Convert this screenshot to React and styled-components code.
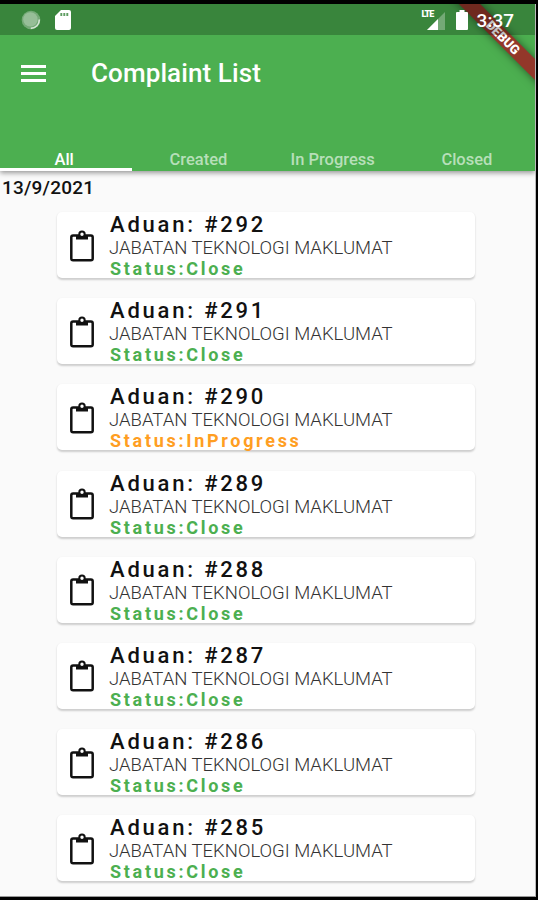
import React from "react";
import styled, { createGlobalStyle } from "styled-components";

const tabs = ["All", "Created", "In Progress", "Closed"];

const complaints = [
  { id: 292, status: "Close" },
  { id: 291, status: "Close" },
  { id: 290, status: "InProgress" },
  { id: 289, status: "Close" },
  { id: 288, status: "Close" },
  { id: 287, status: "Close" },
  { id: 286, status: "Close" },
  { id: 285, status: "Close" },
];

function StatusBar() {
  return (
    <StatusContainer>
      <StatusIcons>
        <svg width="20" height="20" viewBox="0 0 20 20">
          <circle cx="10" cy="10" r="9.3" fill="#fff" fillOpacity="0.3" />
          <circle cx="9.4" cy="9.400" r="7.2" fill="#fff" fillOpacity="0.25" />
          <path
            d="M18.3 9.500a8.500 8.500 0 0 1-8.500 8.900"
            fill="none"
            stroke="#fff"
            strokeOpacity="0.7"
            strokeWidth="1.6"
          />
        </svg>
        <svg width="16" height="20" viewBox="0 0 16 20">
          <path
            d="M6 0h8a2 2 0 0 1 2 2v16a2 2 0 0 1-2 2H2a2 2 0 0 1-2-2V6z"
            fill="#fff"
          />
          <path d="M6.300 3v3M9.300 3v3M12.300 3v3" stroke="#5e9c61" strokeWidth="1.9" />
        </svg>
      </StatusIcons>
      <StatusRight>
        <Signal>
          <span>LTE</span>
          <svg width="18" height="18" viewBox="0 0 18 18">
            <path d="M18 0v18H0z" fill="#fff" fillOpacity="0.3" />
            <path d="M11 7v11H0z" fill="#fff" />
          </svg>
        </Signal>
        <svg width="12" height="20" viewBox="0 0 12 20">
          <path
            d="M3.5 0h5v2H11a1 1 0 0 1 1 1v16a1 1 0 0 1-1 1H1a1 1 0 0 1-1-1V3a1 1 0 0 1 1-1h2.5z"
            fill="#fff"
          />
        </svg>
        <Clock>3:37</Clock>
      </StatusRight>
    </StatusContainer>
  );
}

function Header() {
  return (
    <HeaderContainer>
      <Toolbar>
        <MenuButton>
          <span />
          <span />
          <span />
        </MenuButton>
        <Title>Complaint List</Title>
      </Toolbar>
      <TabBar>
        {tabs.map((tab, index) => (
          <Tab key={tab} $active={index === 0}>
            {tab}
          </Tab>
        ))}
      </TabBar>
    </HeaderContainer>
  );
}

function ComplaintCard({ id, status }) {
  return (
    <Card>
      <svg width="24" height="32" viewBox="0 0 24 32">
        <rect
          x="1.3"
          y="5.4"
          width="21.4"
          height="24.8"
          rx="1.8"
          fill="none"
          stroke="#111"
          strokeWidth="2.5"
        />
        <path d="M6 5h12v4.500H6z" fill="#111" />
        <circle cx="12" cy="4.300" r="2.700" fill="#fff" stroke="#111" strokeWidth="2" />
      </svg>
      <CardText>
        <CardTitle>Aduan: #{id}</CardTitle>
        <Department>JABATAN TEKNOLOGI MAKLUMAT</Department>
        <Status $status={status}>Status:{status}</Status>
      </CardText>
    </Card>
  );
}

function App() {
  return (
    <>
      <GlobalStyle />
      <Frame>
        <Screen>
          <Header />
          <DateLabel>13/9/2021</DateLabel>
          <List>
            {complaints.map((item) => (
              <ComplaintCard key={item.id} id={item.id} status={item.status} />
            ))}
          </List>
          <Ribbon>DEBUG</Ribbon>
          <StatusBar />
        </Screen>
      </Frame>
    </>
  );
}

export default App;

const GlobalStyle = createGlobalStyle`
  * {
    box-sizing: border-box;
  }
  body {
    margin: 0;
    background: #000;
    font-family: Roboto, sans-serif;
  }
`;

const Frame = styled.div`
  width: 538px;
  height: 900px;
  padding: 4px 2px 3px 0;
  background: #000;
`;

const Screen = styled.div`
  position: relative;
  height: 893px;
  overflow: hidden;
  background: #fafafa;
  border-right: 1px solid #bbb;
  border-bottom: 1px solid #999;
`;

/* translucent strip over the top of the app */
const StatusContainer = styled.div`
  position: absolute;
  top: 0;
  left: 0;
  right: 0;
  height: 31px;
  display: flex;
  justify-content: space-between;
  align-items: center;
  padding: 1px 21px 0 21px;
  background: rgba(0, 0, 0, 0.24);
  svg {
    display: block;
  }
`;

const StatusIcons = styled.div`
  display: flex;
  align-items: center;
  gap: 14px;
`;

const StatusRight = styled.div`
  display: flex;
  align-items: center;
`;

const Signal = styled.div`
  position: relative;
  margin-right: 11px;
  padding-top: 1px;
  span {
    position: absolute;
    top: -1px;
    left: -5px;
    color: #fff;
    font-size: 9px;
    line-height: 9px;
    font-weight: 900;
    letter-spacing: -1px;
  }
`;

const Clock = styled.div`
  margin-left: 9px;
  color: #fff;
  font-size: 19px;
  font-weight: 500;
`;

const HeaderContainer = styled.div`
  position: relative;
  display: flex;
  flex-direction: column;
  justify-content: space-between;
  height: 167px;
  padding-top: 31px;
  background: #4caf50;
  box-shadow: 0 2px 5px rgba(0, 0, 0, 0.4);
`;

const Toolbar = styled.div`
  display: flex;
  align-items: center;
  height: 76px;
  padding-left: 21px;
`;

const MenuButton = styled.div`
  display: flex;
  flex-direction: column;
  gap: 4px;
  width: 25px;
  span {
    height: 3px;
    background: #fff;
  }
`;

const Title = styled.div`
  margin-left: 45px;
  color: #fff;
  font-size: 26px;
  font-weight: 500;
  letter-spacing: 0.1px;
`;

const TabBar = styled.div`
  display: flex;
  margin-right: -2px;
`;

const Tab = styled.div`
  position: relative;
  flex: 1;
  height: 25px;
  padding-right: 6px;
  text-align: center;
  font-size: 16.5px;
  line-height: 28px;
  font-weight: 500;
  color: ${(props) => (props.$active ? "#fff" : "#b7dfb9")};

  /* selected tab underline */
  &::after {
    content: "";
    position: absolute;
    left: 0;
    right: 2px;
    bottom: 0;
    height: 3px;
    background: ${(props) => (props.$active ? "#fff" : "transparent")};
  }
`;

const DateLabel = styled.div`
  padding-left: 2px;
  color: #111;
  font-size: 19px;
  line-height: 33px;
  font-weight: 500;
  letter-spacing: 0.2px;
`;

const List = styled.div`
  display: flex;
  flex-direction: column;
  gap: 20.2px;
  margin-top: 8px;
  padding: 0 60px 0 57px;
`;

const Card = styled.div`
  display: flex;
  align-items: center;
  height: 66px;
  padding: 1px 0 0 13px;
  border-radius: 5px;
  background: #fff;
  box-shadow: 0 1.5px 2px rgba(0, 0, 0, 0.18);
`;

const CardText = styled.div`
  margin-left: 16px;
  padding-top: 1px;
  white-space: nowrap;
`;

const CardTitle = styled.div`
  color: #111;
  font-size: 22px;
  line-height: 24px;
  font-weight: 500;
  letter-spacing: 2.8px;
`;

const Department = styled.div`
  margin-left: -1px;
  color: #333;
  font-size: 18.5px;
  line-height: 22px;
  font-weight: 300;
`;

const Status = styled.div`
  color: ${(props) => (props.$status === "Close" ? "#4caf50" : "#ff9e22")};
  font-size: 18px;
  line-height: 20px;
  font-weight: 700;
  letter-spacing: 2.7px;
`;

const Ribbon = styled.div`
  position: absolute;
  top: 24.5px;
  right: -47px;
  width: 160px;
  height: 15px;
  padding-left: 3px;
  transform: rotate(45deg);
  background: #93372a;
  box-shadow: 0 0 8px rgba(0, 0, 0, 0.5);
  color: #fff;
  font-size: 13px;
  line-height: 15px;
  font-weight: 900;
  text-align: center;
`;
